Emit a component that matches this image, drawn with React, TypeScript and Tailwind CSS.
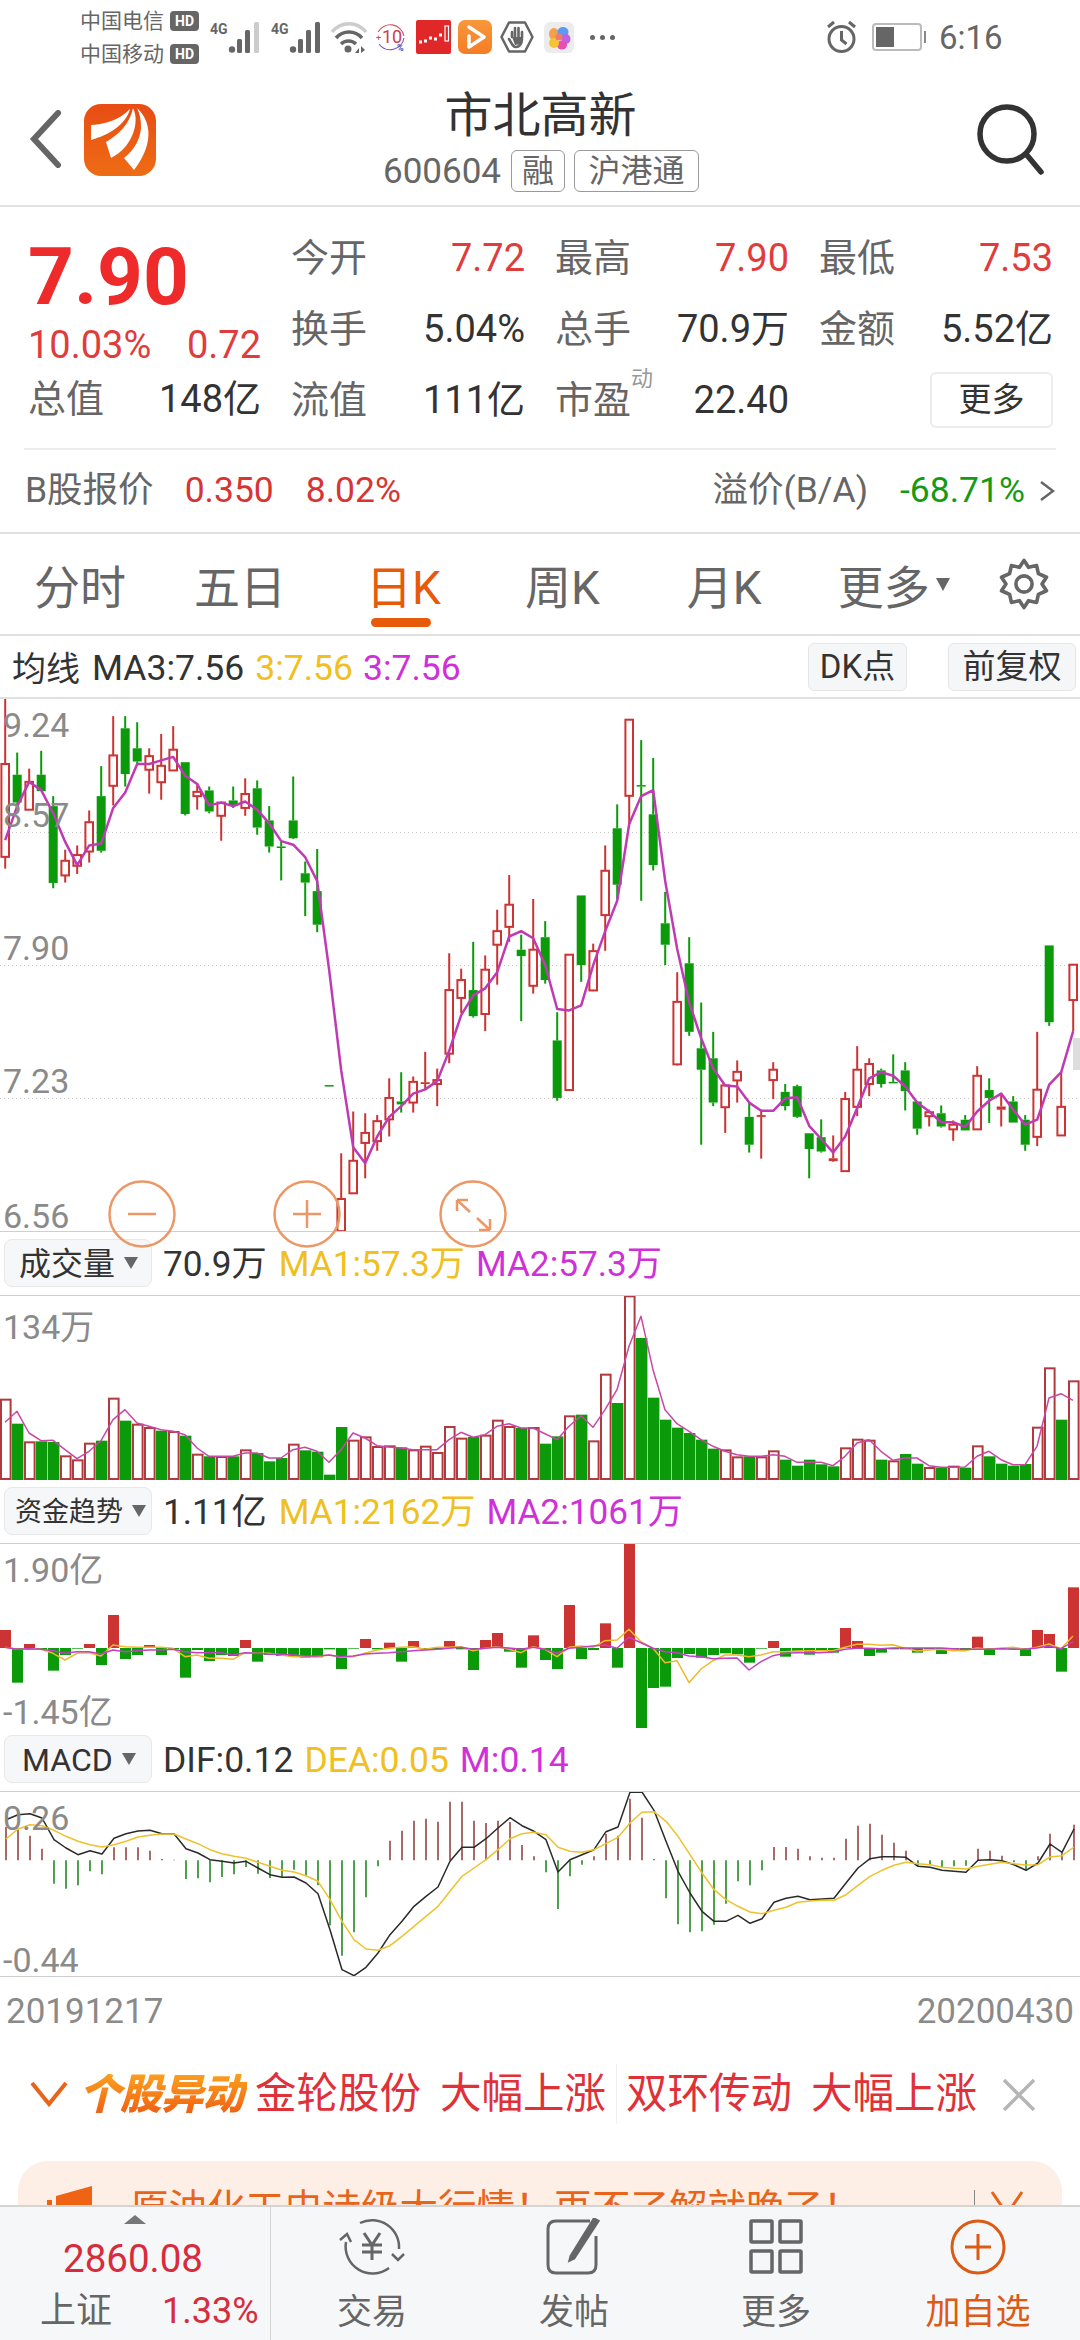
import React from "react";

// candle data: [kind, high, bodyTop, bodyBottom, low]; kind 1 hollow red, 0 green, 2 filled red
const K: number[][] = [
[1,0,182,442,475],[0,150,212,290,300],[1,195,232,310,310],[0,145,212,258,258],[0,272,300,515,530],[1,422,453,494,514],[1,410,437,467,490],[1,312,345,427,458],[0,188,272,425,430],[1,48,158,243,298],
[0,48,82,210,245],[0,65,138,175,180],[1,138,160,198,265],[1,98,187,233,282],[1,76,142,200,200],[0,177,177,322,326],[1,235,260,272,310],[0,245,256,315,320],[1,288,290,327,397],[0,245,284,300,305],
[1,222,266,305,327],[0,228,250,360,380],[0,300,340,413,430],[0,400,413,416,508],[0,217,340,390,392],[0,455,488,514,608],[0,420,538,632,653],[0,1081,1081,1084,1084],[1,1272,1400,1490,1490],[1,1155,1293,1384,1384],
[1,1160,1215,1243,1342],[1,1165,1182,1238,1265],[1,1062,1117,1177,1225],[0,1045,1127,1135,1158],[1,1057,1072,1130,1158],[2,988,1073,1078,1095],[1,1035,1067,1078,1140],[1,712,815,993,1020],[1,755,787,837,880],[0,680,815,888,892],
[1,718,758,882,930],[1,590,650,688,800],[1,493,576,638,680],[0,660,702,720,902],[1,560,702,803,825],[0,622,667,787,797],[0,877,956,1117,1125],[1,715,716,1095,1095],[0,550,550,745,792],[1,685,706,816,818],
[1,410,481,605,705],[0,295,362,520,560],[1,58,58,271,350],[0,115,241,245,565],[0,165,323,465,480],[0,540,628,688,745],[1,765,848,1023,1026],[0,667,740,932,943],[0,850,978,1038,1248],[0,932,1006,1130,1140],
[1,1082,1082,1143,1215],[1,1012,1044,1068,1130],[0,1130,1170,1248,1270],[2,1150,1165,1170,1287],[1,1017,1038,1067,1120],[0,1078,1100,1140,1152],[0,1080,1084,1170,1173],[0,1216,1216,1260,1342],[0,1177,1227,1267,1270],[2,1222,1286,1294,1296],
[1,1100,1120,1322,1322],[1,972,1038,1142,1168],[1,1006,1022,1078,1112],[0,1035,1040,1078,1088],[0,995,1072,1076,1076],[0,1017,1040,1098,1152],[0,1127,1127,1203,1220],[1,1150,1157,1168,1197],[0,1138,1160,1197,1200],[1,1180,1192,1205,1237],
[0,1165,1178,1208,1208],[1,1028,1055,1205,1205],[0,1062,1095,1117,1187],[2,1105,1141,1150,1197],[0,1112,1127,1186,1186],[0,1165,1178,1248,1265],[1,932,1094,1226,1252],[0,690,690,905,915],[1,1045,1142,1222,1222],[1,744,744,843,930],
];
const KMA = [395,300,232,255,320,400,465,410,405,305,262,182,182,172,162,215,238,298,290,300,287,310,348,398,408,443,510,760,1040,1255,1300,1225,1170,1140,1105,1093,1070,985,885,830,810,765,665,650,670,745,868,872,858,745,650,565,350,272,255,510,700,850,950,1035,1082,1085,1130,1153,1153,1118,1115,1195,1232,1270,1225,1145,1062,1045,1055,1085,1130,1155,1185,1185,1198,1155,1125,1105,1150,1192,1178,1080,1045,930];

const VOLK = [1,0,1,0,0,1,1,1,0,1,0,1,1,0,1,0,1,0,1,0,1,0,0,0,1,0,0,0,0,1,1,1,1,0,1,1,1,1,1,0,1,1,1,0,1,0,0,1,0,1,1,0,1,0,0,0,0,0,0,0,1,1,0,1,1,0,0,0,0,0,1,1,1,0,1,0,0,1,0,1,0,1,0,0,0,0,1,1,0,1];
const VOL = [480,552,608,605,607,650,662,612,603,477,543,555,565,573,577,588,645,650,652,650,632,640,665,655,615,632,636,705,562,603,593,622,620,623,632,621,640,562,597,592,588,543,562,565,565,612,590,530,525,605,405,490,170,295,474,540,564,580,600,627,632,653,650,653,635,660,678,660,674,680,626,600,603,660,665,643,672,685,684,681,684,620,650,672,678,673,564,386,540,425];
const VOLMA = [548,515,580,603,602,630,657,635,603,540,510,550,560,570,575,585,625,650,650,650,640,640,655,655,630,623,635,668,630,580,595,618,622,625,630,630,630,600,578,593,585,560,552,565,565,582,600,560,528,563,510,450,320,230,390,510,552,575,600,620,635,645,650,650,645,650,668,668,668,678,650,610,600,635,662,655,655,678,683,683,682,650,635,660,675,675,620,475,462,482];

const FUND = [1170,1328,1212,1228,1292,1245,1226,1212,1275,1125,1257,1245,1215,1245,1228,1313,1230,1263,1245,1248,1200,1265,1245,1248,1250,1253,1252,1228,1287,1226,1197,1228,1208,1265,1203,1228,1228,1203,1228,1290,1200,1179,1235,1283,1186,1260,1287,1095,1257,1230,1150,1283,912,1464,1344,1340,1254,1242,1253,1245,1240,1243,1268,1226,1203,1250,1234,1244,1232,1238,1164,1203,1248,1238,1228,1228,1238,1228,1242,1228,1230,1190,1245,1226,1226,1248,1170,1182,1295,1042];
const FUNDY = [1222,1228,1228,1228,1240,1260,1240,1238,1248,1215,1220,1222,1222,1222,1225,1250,1245,1255,1255,1258,1238,1240,1240,1245,1250,1250,1250,1245,1252,1250,1240,1230,1225,1222,1220,1228,1222,1222,1220,1232,1225,1220,1228,1238,1220,1228,1250,1222,1218,1222,1202,1200,1168,1205,1225,1268,1262,1328,1287,1262,1245,1245,1250,1245,1235,1235,1233,1232,1232,1232,1222,1213,1213,1216,1214,1225,1233,1230,1228,1232,1232,1224,1228,1224,1222,1228,1222,1212,1226,1188];
const FUNDM = [1222,1228,1226,1228,1232,1240,1235,1235,1242,1230,1235,1232,1230,1230,1228,1235,1238,1238,1238,1245,1238,1240,1243,1243,1245,1248,1248,1245,1250,1248,1242,1240,1238,1235,1232,1230,1228,1225,1222,1228,1225,1222,1224,1228,1222,1228,1240,1225,1222,1218,1215,1225,1192,1208,1225,1235,1238,1248,1250,1256,1255,1254,1290,1265,1247,1240,1238,1238,1238,1236,1228,1225,1225,1226,1224,1224,1224,1224,1224,1226,1228,1228,1228,1226,1228,1228,1224,1218,1226,1205];

const MACD = [262,270,288,327,432,447,437,395,404,323,323,323,333,358,360,418,416,428,412,404,382,402,415,412,390,410,437,557,648,578,473,380,303,273,243,237,246,186,186,243,250,243,247,316,350,398,508,410,375,350,283,288,177,234,358,476,554,578,575,555,492,425,437,392,322,322,327,350,354,354,297,258,252,285,309,333,378,376,385,380,378,327,333,348,368,390,350,282,340,255];
const DIF = [240,225,222,235,300,325,345,333,343,296,282,274,272,282,282,327,340,360,365,370,365,385,405,413,412,430,462,570,690,708,683,640,585,545,500,470,442,365,323,323,297,265,234,258,275,300,397,360,345,330,276,262,158,157,212,305,395,460,515,545,545,527,551,537,488,476,470,480,478,476,430,385,357,351,351,353,380,383,392,395,398,362,360,363,375,392,370,313,338,268];
const DEA = [298,268,255,258,272,290,305,315,322,315,305,292,287,283,283,298,312,330,342,350,356,368,380,392,397,408,425,480,545,600,628,632,618,590,560,530,500,455,410,385,360,330,297,282,278,285,323,335,338,330,312,293,250,218,216,245,290,345,400,450,480,500,517,522,512,503,488,484,482,482,465,437,410,392,377,368,372,375,383,386,388,380,374,368,372,376,375,352,348,322];

const pts = (a: number[], f: (v: number) => number, x0: number) =>
  a.map((v, i) => `${(x0 + i * 12).toFixed(1)},${f(v).toFixed(1)}`).join(" ");

const RED = "#cc3333";
const GREEN = "#0a9a0a";

function CandleChart() {
  const y = (v: number) => v / 2.8;
  return (
    <svg width="1080" height="532" className="block">
      {[133, 266, 399].map((g) => (
        <line key={g} x1="0" x2="1080" y1={g + 0.5} y2={g + 0.5} stroke="#c8c8c8" strokeWidth="1" strokeDasharray="1 3" />
      ))}
      {K.map(([t, h, a, b, l], i) => {
        const x = 5.2 + i * 12;
        const c = t === 0 ? GREEN : RED;
        return (
          <g key={i}>
            {h < a && <line x1={x} x2={x} y1={y(h)} y2={y(a)} stroke={c} strokeWidth="2" />}
            {l > b && <line x1={x} x2={x} y1={y(b)} y2={y(l)} stroke={c} strokeWidth="2" />}
            {t === 1 ? (
              <rect x={x - 3.8} y={y(a)} width="7.6" height={y(b) - y(a)} fill="#fff" stroke={c} strokeWidth="2" />
            ) : (
              <rect x={x - 4.5} y={y(a)} width="9" height={Math.max(y(b) - y(a), 1.5)} fill={c} />
            )}
          </g>
        );
      })}
      <polyline points={pts(KMA, y, 5.2)} fill="none" stroke="#c03ab4" strokeWidth="2.5" strokeLinejoin="round" />
      <rect x="1073" y="339" width="7" height="32" fill="#dddddd" />
    </svg>
  );
}

function VolumeChart() {
  const y = (v: number) => (v - 169) / 3;
  return (
    <svg width="1080" height="184" className="block">
      {VOL.map((v, i) =>
        VOLK[i] ? (
          <rect key={i} x={12 * i + 1} y={y(v)} width="9.6" height={184 - y(v) - 1} fill="#fff" stroke="#b23a3e" strokeWidth="2" />
        ) : (
          <rect key={i} x={12 * i} y={y(v)} width="11.4" height={184 - y(v)} fill={GREEN} />
        )
      )}
      <polyline points={pts(VOLMA, y, 5)} fill="none" stroke="#c848a8" strokeWidth="1.5" strokeLinejoin="round" />
    </svg>
  );
}

function FundChart() {
  const y = (v: number) => (v - 912) / 3;
  const z = y(1224);
  return (
    <svg width="1080" height="184" className="block">
      {FUND.map((v, i) => {
        const up = v < 1224;
        return (
          <rect key={i} x={12 * i} y={up ? y(v) : z} width="11" height={Math.abs(y(v) - z)} fill={up ? RED : GREEN} />
        );
      })}
      <polyline points={pts(FUNDY, y, 5)} fill="none" stroke="#eeba2c" strokeWidth="1.5" strokeLinejoin="round" />
      <polyline points={pts(FUNDM, y, 5)} fill="none" stroke="#c040c8" strokeWidth="1.5" strokeLinejoin="round" />
    </svg>
  );
}

function MacdChart() {
  const y = (v: number) => (v - 157) / 3;
  const z = y(362);
  return (
    <svg width="1080" height="184" className="block">
      {MACD.map((v, i) => (
        <line key={i} x1={6 + 12 * i} x2={6 + 12 * i} y1={z} y2={y(v)} stroke={v < 362 ? "#ab6a6a" : "#4f9f4f"} strokeWidth="2" />
      ))}
      <polyline points={pts(DIF, y, 6)} fill="none" stroke="#2a2a2a" strokeWidth="1.5" strokeLinejoin="round" />
      <polyline points={pts(DEA, y, 6)} fill="none" stroke="#eec22c" strokeWidth="1.5" strokeLinejoin="round" />
    </svg>
  );
}

const Caret = () => <span className="ml-[9px] h-0 w-0 shrink-0 border-x-[7px] border-t-[12px] border-x-transparent border-t-[#666]" />;

function IndHeader({ name, pad, size, items }: { name: string; pad: string; size: string; items: [string, string, string][] }) {
  return (
    <div className="flex h-[64px] items-start border-b border-[#cfcfcf] pl-[4px] pt-[7px]">
      <div className={`flex h-[48px] w-[148px] items-center whitespace-nowrap rounded-[8px] border border-[#e8e8e8] bg-[#f6f7f9] leading-none text-[#333] ${pad}`}>
        <span className="pt-[2px]">{name}</span>
        <Caret />
      </div>
      <div className={`ml-[11px] flex h-[48px] items-center pt-[4px] leading-none ${size}`}>
        {items.map(([t, c, ml]) => (
          <span key={t} className={`${c} ${ml}`}>{t}</span>
        ))}
      </div>
    </div>
  );
}

const AxisLabel = ({ top, children }: { top: string; children: React.ReactNode }) => (
  <span className={`absolute left-[3px] text-[34px] leading-[40px] text-[#8a8a8a] ${top}`}>{children}</span>
);

function Signal({ weak }: { weak?: boolean }) {
  return (
    <svg width="32" height="31" viewBox="0 0 32 31">
      <circle cx="4" cy="27.5" r="3.2" fill="#666" />
      <rect x="9" y="17" width="5" height="14" rx="1.5" fill="#666" />
      <rect x="17" y="8" width="5" height="23" rx="1.5" fill="#666" />
      <rect x="26" y="0" width="5" height="31" rx="1.5" fill={weak ? "#ccc" : "#666"} />
    </svg>
  );
}

function HD() {
  return <span className="ml-[6px] flex h-[20px] w-[29px] items-center justify-center rounded-[4px] bg-[#666] text-[14px] font-bold leading-none text-white">HD</span>;
}

function StatusBar() {
  return (
    <div className="flex h-[90px] items-center pb-[16px] pl-[80px] text-[#666]">
      <div className="flex w-[130px] flex-col gap-[11px] text-[21px] leading-[22px]">
        <div className="flex items-center">中国电信<HD /></div>
        <div className="flex items-center">中国移动<HD /></div>
      </div>
      <div className="flex items-start">
        <span className="w-[18px] text-[14px] font-bold leading-[14px]">4G</span>
        <Signal weak />
      </div>
      <div className="ml-[11px] flex items-start">
        <span className="w-[18px] text-[14px] font-bold leading-[14px]">4G</span>
        <Signal />
      </div>
      <svg width="38" height="31" viewBox="0 0 38 31" className="ml-[9px]" fill="none">
        <path d="M2 10 C11 -1 27 -1 36 10" stroke="#ccc" strokeWidth="3.5" />
        <path d="M6 16 C13 8 25 8 32 16" stroke="#666" strokeWidth="3.5" />
        <path d="M11 22 C15 18 22 18 26 22" stroke="#666" strokeWidth="3.5" />
        <circle cx="18" cy="27" r="3.5" fill="#666" />
        <path d="M25 31 L29 26 V31Z M31 24 L35 28 L31 31Z" fill="#666" />
      </svg>
      <svg width="30" height="30" viewBox="0 0 30 30" className="ml-[8px]" fill="none">
        <path d="M2 10 A14 14 0 0 1 28 14" stroke="#d85060" strokeWidth="1.1" />
        <path d="M28 16 A14 14 0 0 1 3 22" stroke="#8050c0" strokeWidth="1.1" />
        <text x="0" y="19" fontSize="9" fill="#d04050" fontFamily="Roboto">+</text>
        <text x="6" y="21" fontSize="18" fill="#c84050" fontFamily="Roboto">10</text>
        <text x="21" y="29" fontSize="9" fontWeight="700" fill="#4050c0" fontFamily="Roboto">%</text>
      </svg>
      <svg width="35" height="34" viewBox="0 0 35 34" className="ml-[10px]">
        <rect width="35" height="34" rx="2" fill="#e02828" />
        <path d="M3 22h3M8 21h3M13 18h3M18 19h3M23 15h3" stroke="#fff" strokeWidth="3" />
        <rect x="29" y="6" width="3.5" height="15" fill="none" stroke="#fff" strokeWidth="1.2" />
      </svg>
      <svg width="34" height="34" viewBox="0 0 34 34" className="ml-[7px]">
        <defs><linearGradient id="og" x1="0" y1="0" x2="0" y2="1"><stop offset="0" stopColor="#f8973c" /><stop offset="1" stopColor="#f57d24" /></linearGradient></defs>
        <rect width="34" height="34" rx="7" fill="url(#og)" />
        <path d="M11 7 L26 17 L11 27 V16" fill="none" stroke="#fff" strokeWidth="3.5" strokeLinejoin="round" strokeLinecap="round" />
      </svg>
      <svg width="34" height="32" viewBox="0 0 34 32" className="ml-[8px]">
        <path d="M9 1.5h16L32.5 16 25 30.5H9L1.5 16Z" fill="#fff" stroke="#666" strokeWidth="2.5" strokeLinejoin="round" />
        <path d="M12 16v-5m3 5V7m3.5 9V7M22 17v-6m0 7c0 5-3 8-6 8s-4-3-7-8" fill="none" stroke="#666" strokeWidth="2.6" strokeLinecap="round" />
        <path d="M12 16 L22 16 L21 23 L15 24Z" fill="#666" />
      </svg>
      <svg width="30" height="31" viewBox="0 0 30 31" className="ml-[10px]">
        <rect width="30" height="31" rx="6" fill="#ececec" />
        <ellipse cx="10" cy="12" rx="5" ry="6" fill="#f2a04a" />
        <ellipse cx="19" cy="10" rx="5.5" ry="5" fill="#5a9af0" />
        <ellipse cx="22" cy="17" rx="4.5" ry="5" fill="#c060e0" />
        <ellipse cx="18" cy="23" rx="5" ry="4.5" fill="#e84fb0" />
        <ellipse cx="10" cy="21" rx="5" ry="5" fill="#f5c430" />
        <circle cx="15" cy="15" r="3.5" fill="#ef7a6a" />
      </svg>
      <div className="ml-[16px] flex gap-[5px]">
        <span className="h-[5px] w-[5px] rounded-full bg-[#666]" />
        <span className="h-[5px] w-[5px] rounded-full bg-[#666]" />
        <span className="h-[5px] w-[5px] rounded-full bg-[#666]" />
      </div>
      <svg width="33" height="34" viewBox="0 0 33 34" className="ml-[210px]" fill="none" stroke="#666" strokeWidth="3">
        <circle cx="16.5" cy="19" r="12.5" />
        <path d="M16.5 11v9l5 4M3 7l6-5M30 7l-6-5" />
      </svg>
      <div className="ml-[14px] flex items-center">
        <span className="flex h-[28px] w-[50px] items-center rounded-[4px] border-2 border-[#bbb] p-[2px]"><span className="h-full w-[18px] bg-[#666]" /></span>
        <span className="ml-[2px] h-[12px] w-[2px] bg-[#888]" />
      </div>
      <span className="ml-[13px] text-[33px] leading-none">6:16</span>
    </div>
  );
}

function Logo() {
  return (
    <svg width="72" height="72" viewBox="0 0 72 72">
      <defs><linearGradient id="lg" x1="0" y1="0" x2="0" y2="1"><stop offset="0" stopColor="#e84c14" /><stop offset="1" stopColor="#ee6c14" /></linearGradient></defs>
      <rect width="72" height="72" rx="17" fill="url(#lg)" />
      <path d="M7 21 C18 21 36 16 46 5 C44 14 36 22 28 27 C20 32 13 34 7 36 Z" fill="#fff" />
      <path d="M22 38 C34 31 46 20 49 4 C55 16 50 32 42 42 C37 48 32 51 27 54 Z" fill="#fff" />
      <path d="M53 4 C62 12 66 24 64 36 C62 48 56 58 50 66 L40 54 C50 46 56 36 57 24 C57 16 56 10 53 4Z" fill="#fff" />
    </svg>
  );
}

function Header() {
  return (
    <div className="relative flex h-[117px] items-start border-b-2 border-[#e2e2e2]">
      <svg width="36" height="58" viewBox="0 0 36 58" className="ml-[28px] mt-[20px]" fill="none" stroke="#666" strokeWidth="6">
        <path d="M30 3 L6 29 L30 55" strokeLinecap="round" />
      </svg>
      <div className="ml-[20px] mt-[14px]"><Logo /></div>
      <div className="flex flex-1 flex-col items-center">
        <span className="ml-[-50px] text-[48px] leading-[52px] text-[#333]">市北高新</span>
        <div className="ml-[-49px] mt-[8px] flex items-center text-[35px] leading-none text-[#666]">
          <span>600604</span>
          <span className="ml-[10px] flex h-[42px] w-[54px] items-center justify-center rounded-[6px] border border-[#999] text-[32px]">融</span>
          <span className="ml-[9px] flex h-[42px] w-[125px] items-center justify-center rounded-[6px] border border-[#999] text-[32px]">沪港通</span>
        </div>
      </div>
      <svg width="72" height="74" viewBox="0 0 72 74" className="mr-[33px] mt-[12px]" fill="none" stroke="#333" strokeWidth="5.5">
        <circle cx="32" cy="32" r="27" />
        <path d="M51 52 L66 70" strokeLinecap="round" />
      </svg>
    </div>
  );
}

function Stat({ l, v, c, sup }: { l: string; v: string; c: string; sup?: boolean }) {
  return (
    <div className="relative flex h-full items-center justify-between">
      <span className="text-[#666]">{l}</span>
      {sup && <span className="absolute left-[76px] top-[4px] text-[22px] leading-none text-[#999]">动</span>}
      <span className={c}>{v}</span>
    </div>
  );
}

function Quote() {
  return (
    <div className="flex h-[241px] gap-[30px] pl-[28px] pt-[15px] text-[38px] leading-none">
      <div className="flex w-[233px] flex-col">
        <div className="flex h-[106px] items-center pt-[4px] text-[80px] font-bold leading-none text-[#ee2a2a]">7.90</div>
        <div className="flex h-[34px] items-center justify-between text-[#e03c3c]"><span>10.03%</span><span>0.72</span></div>
        <div className="flex h-[73px] items-center justify-between"><span className="text-[#666]">总值</span><span className="text-[#333]">148亿</span></div>
      </div>
      <div className="grid w-[762px] grid-cols-3 grid-rows-[71px_71px_71px] gap-x-[30px]">
        <Stat l="今开" v="7.72" c="text-[#e03c3c]" />
        <Stat l="最高" v="7.90" c="text-[#e03c3c]" />
        <Stat l="最低" v="7.53" c="text-[#e03c3c]" />
        <Stat l="换手" v="5.04%" c="text-[#333]" />
        <Stat l="总手" v="70.9万" c="text-[#333]" />
        <Stat l="金额" v="5.52亿" c="text-[#333]" />
        <Stat l="流值" v="111亿" c="text-[#333]" />
        <Stat l="市盈" v="22.40" c="text-[#333]" sup />
        <div className="flex items-center justify-end">
          <span className="flex h-[56px] w-[123px] items-center justify-center rounded-[6px] border-2 border-[#ececec] text-[33px] text-[#333]">更多</span>
        </div>
      </div>
    </div>
  );
}

function BRow() {
  return (
    <div className="mx-[24px] border-t-2 border-[#ececec]">
      <div className="flex h-[82px] items-center pl-[1px] pr-[1px] text-[35.5px] leading-none">
        <span className="text-[#666]">B股报价</span>
        <span className="ml-[31px] text-[#d83434]">0.350</span>
        <span className="ml-[32px] text-[#d83434]">8.02%</span>
        <span className="ml-auto text-[#666]">溢价(B/A)</span>
        <span className="ml-[32px] text-[#149a14]">-68.71%</span>
        <svg width="16" height="24" viewBox="0 0 16 24" className="ml-[14px]" fill="none" stroke="#666" strokeWidth="2.5"><path d="M2 3 L14 12 L2 21" /></svg>
      </div>
    </div>
  );
}

function Tabs() {
  return (
    <div className="relative flex h-[104px] items-center border-y-2 border-[#e0e0e0] pl-[34px] text-[46px] leading-none text-[#666]">
      <span className="pt-[8px]">分时</span>
      <span className="ml-[68px] pt-[8px]">五日</span>
      <span className="relative ml-[80px] pt-[8px] text-[#e65a0a]">日K<span className="absolute left-[5px] top-[61px] h-[9px] w-[60px] rounded-full bg-[#e65a0a]" /></span>
      <span className="ml-[84px] pt-[8px]">周K</span>
      <span className="ml-[87px] pt-[8px]">月K</span>
      <span className="ml-[76px] pt-[8px]">更多</span>
      <span className="ml-[6px] h-0 w-0 border-x-[7px] border-t-[13px] border-x-transparent border-t-[#666]" />
      <svg width="54" height="54" viewBox="0 0 24 24" className="ml-[47px]" fill="none" stroke="#666" strokeWidth="1.6" strokeLinejoin="round">
        <path d="M12 1.5 14 4.6 17.6 3.8 18.4 7.4 22 9 20 12 22 15 18.4 16.6 17.6 20.2 14 19.4 12 22.5 10 19.4 6.4 20.2 5.6 16.6 2 15 4 12 2 9 5.6 7.4 6.4 3.8 10 4.6Z" />
        <circle cx="12" cy="12" r="3.6" />
      </svg>
    </div>
  );
}

function MaRow() {
  const btn = "flex h-[48px] items-center justify-center rounded-[6px] border border-[#e6e6e6] bg-[#f5f6f8] text-[33px] leading-none text-[#333]";
  return (
    <div className="flex h-[63px] items-center border-b-2 border-[#e0e0e0] pl-[12px] pr-[4px] text-[35.5px] leading-none">
      <span className="pt-[4px] text-[34px] text-[#333]">均线</span>
      <span className="ml-[12px] pt-[4px] text-[#333]">MA3:7.56</span>
      <span className="ml-[11px] pt-[4px] text-[#f0c020]">3:7.56</span>
      <span className="ml-[10px] pt-[4px] text-[#d030d8]">3:7.56</span>
      <span className={`ml-auto w-[99px] ${btn}`}>DK点</span>
      <span className={`ml-[41px] w-[128px] ${btn}`}>前复权</span>
    </div>
  );
}

function Circles() {
  const left = ["left-[108px]", "left-[273px]", "left-[439px]"];
  return (
    <>
      {[
        <path key="a" d="M20 34 H48" />,
        <path key="b" d="M20 34 H48 M34 20 V48" />,
        <path key="c" d="M18 20 L31 32 M18 20 H29 M18 20 V31 M38 38 L51 50 M51 50 H40 M51 50 V39" />,
      ].map((p, i) => (
        <svg
          key={i}
          width="68"
          height="68"
          viewBox="0 0 68 68"
          fill="none"
          stroke="#ee9766"
          strokeWidth="2.5"
          className={`absolute top-[481px] ${left[i]}`}
        >
          <circle cx="34" cy="34" r="32.5" />
          {p}
        </svg>
      ))}
    </>
  );
}

function Ticker() {
  return (
    <div className="flex h-[117px] items-start pl-[30px] pt-[30px] text-[41.5px] leading-[40px] text-[#e03038]">
      <svg width="38" height="26" viewBox="0 0 38 26" className="mt-[7px]" fill="none" stroke="#e8641a" strokeWidth="4"><path d="M2 2 L19 23 L36 2" /></svg>
      <span className="ml-[11px] mr-[8px] w-[168px] whitespace-nowrap bg-gradient-to-b from-[#fb9f1e] to-[#ee5c12] bg-clip-text text-[42px] font-black italic leading-[42px] tracking-[-1px] text-transparent">个股异动</span>
      <span>金轮股份</span>
      <span className="ml-[19px]">大幅上涨</span>
      <span className="ml-[10px] mr-[9px] mt-[-10px] h-[60px] w-px bg-[#f0f0f0]" />
      <span>双环传动</span>
      <span className="ml-[19px]">大幅上涨</span>
      <svg width="34" height="34" viewBox="0 0 34 34" className="ml-[25px] mt-[4px]" fill="none" stroke="#b5b5b5" strokeWidth="3.5"><path d="M2 2 L32 32 M32 2 L2 32" /></svg>
    </div>
  );
}

function Banner() {
  return (
    <div className="mx-[18px] flex h-[44px] items-start overflow-hidden rounded-t-[30px] bg-[#fdeee6] pl-[29px] pt-[25px]">
      <svg width="46" height="20" viewBox="0 0 46 20"><path d="M0 14h5v6H0Z M9 10 L45 0 V20 H9Z" fill="#ee6414" /></svg>
      <span className="ml-[37px] mt-[4px] whitespace-nowrap text-[38.5px] leading-[38px] text-[#e8641a]">原油化工史诗级大行情！再不了解就晚了！</span>
      <span className="ml-[112px] mt-[4px] h-[30px] w-px bg-[#888]" />
      <svg width="34" height="30" viewBox="0 0 34 30" className="ml-[15px] mt-[4px]" fill="none" stroke="#e8641a" strokeWidth="3"><path d="M2 2 L17 24 L32 2" /></svg>
    </div>
  );
}

function NavItem({ label, orange, children }: { label: string; orange?: boolean; children: React.ReactNode }) {
  return (
    <div className="flex w-[202px] flex-col items-center pt-[11px]">
      <div className="flex h-[58px] items-center">{children}</div>
      <span className={`mt-[19px] text-[35px] leading-none ${orange ? "text-[#dd5a14]" : "text-[#666]"}`}>{label}</span>
    </div>
  );
}

function BottomNav() {
  return (
    <div className="flex h-[135px] border-t-2 border-[#d4d4d4] bg-[#f6f7f9]">
      <div className="flex w-[271px] flex-col border-r border-[#d4d4d4]">
        <span className="ml-[124px] mt-[8px] h-0 w-0 border-x-[11px] border-b-[9px] border-x-transparent border-b-[#777]" />
        <span className="mt-[16px] pl-[63px] text-[38.5px] leading-none text-[#d62c3c]">2860.08</span>
        <div className="mt-[14px] flex items-center pl-[40px] text-[36px] leading-none">
          <span className="text-[#666]">上证</span>
          <span className="ml-[50px] text-[#d62c3c]">1.33%</span>
        </div>
      </div>
      <NavItem label="交易">
        <svg width="70" height="58" viewBox="0 0 70 58" fill="none" stroke="#666" strokeWidth="2.5">
          <path d="M23 5 A27 27 0 0 1 62 31" />
          <path d="M55 36 L61 42 L67 36" />
          <path d="M52 50 A27 27 0 0 1 9 24" />
          <path d="M3 22 L10 16 L14 24" />
          <path d="M35 27 V42 M27 15 L35 27 L43 15 M25 27 H45 M25 34 H45" strokeWidth="3" />
        </svg>
      </NavItem>
      <NavItem label="发帖">
        <svg width="56" height="58" viewBox="0 0 56 58" fill="none" stroke="#666" strokeWidth="3">
          <path d="M44 3 H10 Q2 3 2 11 V47 Q2 55 10 55 H42 Q50 55 50 47 V18" />
          <path d="M52 3 L48 1 L25 38 L24 42 L28 40 Z" fill="#666" />
        </svg>
      </NavItem>
      <NavItem label="更多">
        <svg width="54" height="56" viewBox="0 0 54 56" fill="none" stroke="#666" strokeWidth="3.5">
          <rect x="2" y="2" width="21" height="21" rx="1" />
          <rect x="31" y="2" width="21" height="21" rx="1" />
          <rect x="2" y="32" width="21" height="21" rx="1" />
          <rect x="31" y="32" width="21" height="21" rx="1" />
        </svg>
      </NavItem>
      <NavItem label="加自选" orange>
        <svg width="56" height="56" viewBox="0 0 56 56" fill="none" stroke="#dd5a14" strokeWidth="3">
          <circle cx="28" cy="28" r="26" />
          <path d="M15 28 H41 M28 15 V41" />
        </svg>
      </NavItem>
    </div>
  );
}

export default function App() {
  return (
    <div className="relative h-[2340px] w-[1080px] overflow-hidden bg-white [font-family:Roboto,'Noto_Sans_CJK_SC',sans-serif]">
      <StatusBar />
      <Header />
      <Quote />
      <BRow />
      <Tabs />
      <MaRow />
      <div className="relative border-b border-[#cfcfcf]">
        <CandleChart />
        <AxisLabel top="top-[6px]">9.24</AxisLabel>
        <AxisLabel top="top-[96px]">8.57</AxisLabel>
        <AxisLabel top="top-[229px]">7.90</AxisLabel>
        <AxisLabel top="top-[362px]">7.23</AxisLabel>
        <AxisLabel top="top-[497px]">6.56</AxisLabel>
        <Circles />
      </div>
      <IndHeader
        name="成交量"
        pad="pl-[14px] text-[32px]"
        size="text-[35.2px]"
        items={[
          ["70.9万", "text-[#333]", ""],
          ["MA1:57.3万", "text-[#f0c020]", "ml-[12px]"],
          ["MA2:57.3万", "text-[#d030d8]", "ml-[11px]"],
        ]}
      />
      <div className="relative">
        <VolumeChart />
        <AxisLabel top="top-[11px]">134万</AxisLabel>
      </div>
      <IndHeader
        name="资金趋势"
        pad="pl-[10px] text-[27px]"
        size="text-[35.2px]"
        items={[
          ["1.11亿", "text-[#333]", ""],
          ["MA1:2162万", "text-[#f0c020]", "ml-[12px]"],
          ["MA2:1061万", "text-[#d030d8]", "ml-[11px]"],
        ]}
      />
      <div className="relative">
        <FundChart />
        <AxisLabel top="top-[6px]">1.90亿</AxisLabel>
        <AxisLabel top="top-[148px]">-1.45亿</AxisLabel>
      </div>
      <IndHeader
        name="MACD"
        pad="pl-[17px] text-[32px]"
        size="text-[35.5px]"
        items={[
          ["DIF:0.12", "text-[#333]", ""],
          ["DEA:0.05", "text-[#f0c020]", "ml-[11px]"],
          ["M:0.14", "text-[#d030d8]", "ml-[11px]"],
        ]}
      />
      <div className="relative border-b border-[#cfcfcf]">
        <MacdChart />
        <AxisLabel top="top-[6px]">0.26</AxisLabel>
        <AxisLabel top="top-[148px]">-0.44</AxisLabel>
      </div>
      <div className="flex h-[67px] items-center justify-between px-[6px] pt-[2px] text-[35px] leading-none text-[#8a8a8a]">
        <span>20191217</span>
        <span>20200430</span>
      </div>
      <Ticker />
      <Banner />
      <BottomNav />
    </div>
  );
}
